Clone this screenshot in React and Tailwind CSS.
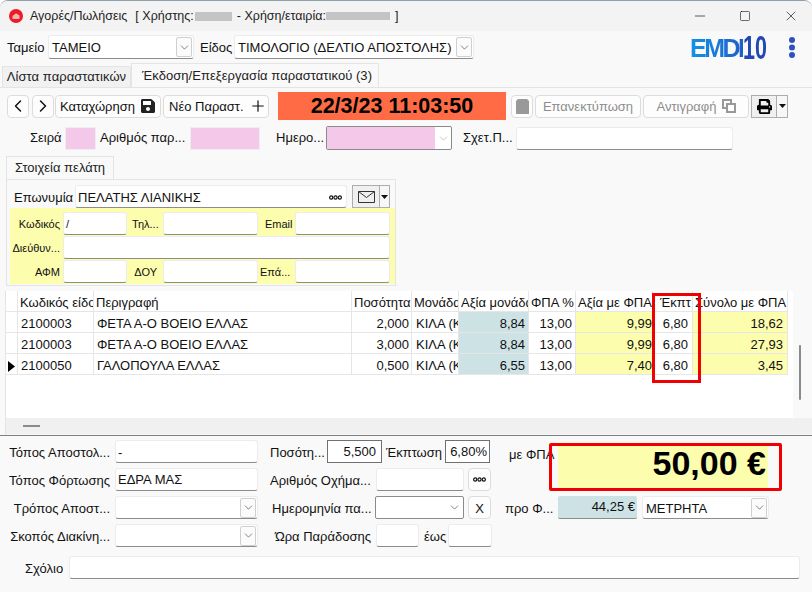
import React from "react";
import { ChevronLeft, ChevronRight, Plus, ChevronDown, Minus, Square, X } from "lucide-react";
import { FaSave, FaPrint } from "react-icons/fa";

const box = "bg-white border border-[#ececec] border-b-[#8c8c8c] rounded-[3px] h-[23px] flex items-center overflow-hidden whitespace-nowrap shrink-0 pt-[2px]";

function Inp({ className = "", children }) {
  return <div className={`${box} px-[2px] ${className}`}>{children}</div>;
}

function Lab({ className = "", children }) {
  return <div className={`shrink-0 whitespace-nowrap pt-[2px] ${className}`}>{children}</div>;
}

function SmallLab({ className = "", children }) {
  return <div className={`shrink-0 whitespace-nowrap ${className}`}>{children}</div>;
}

function DropBtn({ className = "" }) {
  return (
    <div className={`w-[16px] h-[20px] -mt-[2px] bg-[#fbfbfb] border border-[#cfcfcf] rounded-[2px] flex items-center justify-center shrink-0 ${className}`}>
      <ChevronDown size={13} strokeWidth={1.2} color="#444" />
    </div>
  );
}

function Sel({ className = "", children }) {
  return (
    <div className={`${box} pl-[3px] pr-[1px] justify-between ${className}`}>
      <span>{children}</span>
      <DropBtn />
    </div>
  );
}

function Btn({ className = "", children }) {
  return (
    <div className={`h-[23px] bg-[#fdfdfd] border border-[#dcdcdc] rounded-[4px] flex items-center justify-center shrink-0 whitespace-nowrap ${className}`}>
      {children}
    </div>
  );
}

function Caret() {
  return (
    <svg width="7" height="4" viewBox="0 0 7 4"><path d="M0 0h7L3.5 4z" fill="#111" /></svg>
  );
}

function Dots() {
  return (
    <svg width="13" height="5" viewBox="0 0 13 5" fill="none" stroke="#111" strokeWidth="1.2">
      <circle cx="2.2" cy="2.5" r="1.6" /><circle cx="6.5" cy="2.5" r="1.6" /><circle cx="10.8" cy="2.5" r="1.6" />
    </svg>
  );
}

const cols = "grid grid-cols-[12px_76px_258px_60px_47px_70px_47px_77px_40px_95px] w-[782px]";
const cell = "h-[21px] pt-[4px] border-r border-b border-[#e6e6e6] overflow-hidden whitespace-nowrap flex items-center";

const headers = ["", "Κωδικός είδους", "Περιγραφή", "Ποσότητα", "Μονάδα μέτρ", "Αξία μονάδας", "ΦΠΑ %", "Αξία με ΦΠΑ", "Έκπτ", "Σύνολο με ΦΠΑ"];
const rows = [
  ["", "2100003", "ΦΕΤΑ Α-Ο ΒΟΕΙΟ ΕΛΛΑΣ", "2,000", "ΚΙΛΑ (ΚΙΛΑ)", "8,84", "13,00", "9,99", "6,80", "18,62"],
  ["", "2100003", "ΦΕΤΑ Α-Ο ΒΟΕΙΟ ΕΛΛΑΣ", "3,000", "ΚΙΛΑ (ΚΙΛΑ)", "8,84", "13,00", "9,99", "6,80", "27,93"],
  ["arrow", "2100050", "ΓΑΛΟΠΟΥΛΑ ΕΛΛΑΣ", "0,500", "ΚΙΛΑ (ΚΙΛΑ)", "6,55", "13,00", "7,40", "6,80", "3,45"],
];

function rowCellClass(i) {
  if (i === 0) return "justify-center";
  if (i === 1 || i === 2) return "pl-[3px]";
  if (i === 3) return "justify-end pr-[2px]";
  if (i === 4) return "pl-[4px]";
  if (i === 5) return "justify-end pr-[3px] bg-[#cde2e5]";
  if (i === 6) return "justify-end pr-[3px]";
  if (i === 7) return "justify-end pr-[0px] bg-[#fdfdae]";
  if (i === 9) return "justify-end pr-[4px] bg-[#fdfdae]";
  return "justify-end pr-[4px]";
}

export default function App() {
  return (
    <div className="relative w-[812px] h-[592px] overflow-hidden bg-[#f9f9f9] text-[13px] leading-[16px] text-[#111] border-t border-[#8fa1ab] rounded-t-[8px]" style={{ fontFamily: '"Liberation Sans", Arial, sans-serif' }}>
      {/* title bar */}
      <div className="h-[30px] bg-[#f3f3f3] flex items-center text-[12.5px] text-[#222]">
        <svg className="ml-[9px] shrink-0" width="14" height="14" viewBox="0 0 14 14">
          <circle cx="7" cy="7" r="7" fill="#ed1c24" />
          <path d="M3.5 7 7 4.2l3.5 2.3V10h-7z" fill="#f7b5b5" />
        </svg>
        <span className="ml-[7px]">Αγορές/Πωλήσεις</span>
        <span className="ml-[8px]">[ Χρήστης:</span>
        <div className="ml-[1px] w-[37px] h-[9px] bg-[#c4c4c4]" />
        <span className="ml-[5px]">- Χρήση/εταιρία:</span>
        <div className="w-[64px] h-[8px] bg-[#c4c4c4]" />
        <span className="ml-[5px]">]</span>
        <div className="ml-auto flex items-center text-[#111]">
          <Minus size={16} strokeWidth={1} className="mr-[31px]" />
          <Square size={12} strokeWidth={1.2} className="mr-[32px]" />
          <X size={16} strokeWidth={1} className="mr-[13px]" />
        </div>
      </div>

      {/* top row */}
      <div className="mt-[4px] h-[24px] flex items-center">
        <Lab className="ml-[7px] w-[41px]">Ταμείο</Lab>
        <Sel className="w-[146px] !h-[24px]">ΤΑΜΕΙΟ</Sel>
        <Lab className="ml-[6px] w-[34px]">Είδος</Lab>
        <Sel className="w-[240px] !h-[24px]">ΤΙΜΟΛΟΓΙΟ (ΔΕΛΤΙΟ ΑΠΟΣΤΟΛΗΣ)</Sel>
        <div className="ml-[216px] w-[78px] h-[24px] flex items-center font-bold leading-none">
          <span className="text-[25px] tracking-[-2.5px] mt-[3px] bg-gradient-to-r from-[#1193e8] to-[#1d5fc8] bg-clip-text text-transparent">EMDI</span>
          <span className="text-[33px] text-[#2347b5] origin-left scale-x-[0.65]">10</span>
        </div>
        <svg className="ml-[20px]" width="8" height="23" viewBox="0 0 8 23" fill="#2f51bd">
          <circle cx="4" cy="4" r="3" /><circle cx="4" cy="11.5" r="3" /><circle cx="4" cy="19" r="3" />
        </svg>
      </div>

      {/* tabs */}
      <div className="mt-[4px] h-[24px] flex items-end">
        <div className="ml-[2px] w-[129px] h-[21px] bg-[#f1f1f1] border border-b-0 border-[#e4e4e4] flex items-center justify-center text-[#222] tracking-[0.05px]">Λίστα παραστατικών</div>
        <div className="w-[248px] h-[24px] bg-[#f9f9f9] border border-b-0 border-[#e4e4e4] flex items-center pl-[10px] text-[#222] tracking-[0.05px]">Έκδοση/Επεξεργασία παραστατικού (3)</div>
      </div>

      {/* tab page */}
      <div className="border-t border-[#e4e4e4] h-[504px] flex flex-col">
        {/* toolbar */}
        <div className="mt-[4px] h-[28px] flex items-center">
          <Btn className="ml-[7px] w-[22px]"><ChevronLeft size={22} strokeWidth={1.8} color="#111" /></Btn>
          <Btn className="ml-[3px] w-[22px]"><ChevronRight size={22} strokeWidth={1.8} color="#111" /></Btn>
          <Btn className="ml-[1px] w-[106px] gap-[5px]"><span className="pt-[2px]">Καταχώρηση</span> <FaSave size={16} color="#222" /></Btn>
          <Btn className="ml-[2px] w-[106px] !justify-start pl-[5px] gap-[5px]"><span className="pt-[2px]">Νέο Παραστ.</span> <Plus size={18} strokeWidth={1.6} color="#111" /></Btn>
          <div className="ml-[9px] w-[228px] h-[28px] bg-[#ff6b45] flex items-center justify-center text-[21.5px] font-bold text-black">22/3/23 11:03:50</div>
          <Btn className="ml-[5px] w-[22px] bg-[#f9f9f9]">
            <svg width="13" height="15" viewBox="0 0 13 15"><path d="M2 0h9l2 2v13H0V2z" fill="#999" /></svg>
          </Btn>
          <Btn className="ml-[2px] w-[106px] text-[#8d8d8d] bg-[#f9f9f9] pt-[2px]">Επανεκτύπωση</Btn>
          <Btn className="ml-[2px] w-[106px] text-[#8d8d8d] bg-[#f9f9f9] gap-[5px]">
            <span className="pt-[2px]">Αντιγραφή</span>
            <svg width="14" height="14" viewBox="0 0 14 14"><path d="M0 0h10v4h4v10H4v-4H0zM2 2v6h2V4h4V2zM6 6v6h6V6z" fill="#999" /></svg>
          </Btn>
          <div className="ml-[2px] w-[37px] h-[23px] flex border border-[#adadad] bg-[#f0f0f0] shrink-0">
            <div className="w-[25px] flex items-center justify-center border-r border-[#adadad]"><FaPrint size={15} color="#000" /></div>
            <div className="flex-1 flex items-center justify-center bg-[#f7f7f7]"><Caret /></div>
          </div>
        </div>

        {/* series row */}
        <div className="mt-[6px] h-[24px] flex items-center">
          <SmallLab className="ml-[30px] w-[35px]">Σειρά</SmallLab>
          <div className="w-[31px] h-[23px] bg-[#f3c8e8] border border-[#eee] shrink-0" />
          <SmallLab className="ml-[4px] w-[90px]">Αριθμός παρ...</SmallLab>
          <div className="w-[70px] h-[23px] bg-[#f3c8e8] border border-[#eee] shrink-0" />
          <SmallLab className="ml-[16px] w-[50px]">Ημερο...</SmallLab>
          <div className="w-[126px] h-[24px] flex border border-[#8a8a8a] rounded-[2px] bg-white shrink-0">
            <div className="w-[108px] bg-[#f3c8e8]" />
            <div className="flex-1 flex items-center justify-center"><ChevronDown size={13} strokeWidth={1} color="#999" /></div>
          </div>
          <SmallLab className="ml-[11px] w-[53px]">Σχετ.Π...</SmallLab>
          <Inp className="w-[217px]" />
        </div>

        {/* customer */}
        <div className="mt-[6px] ml-[6px] w-[108px] h-[23px] bg-[#f9f9f9] border border-b-0 border-[#e4e4e4] flex items-center pl-[8px] text-[#222]">Στοιχεία πελάτη</div>
        <div className="ml-[6px] w-[390px] h-[107px] border border-[#e4e4e4] flex flex-col pt-[5px]">
          <div className="h-[23px] flex items-center">
            <Lab className="ml-[7px] w-[61px]">Επωνυμία</Lab>
            <Inp className="w-[272px] justify-between">
              <span>ΠΕΛΑΤΗΣ ΛΙΑΝΙΚΗΣ</span>
              <span className="mr-[2px]"><Dots /></span>
            </Inp>
            <div className="ml-[5px] w-[38px] h-[23px] flex border border-[#adadad] bg-[#f0f0f0] shrink-0">
              <div className="w-[27px] flex items-center justify-center border-r border-[#adadad]">
                <svg width="17" height="12" viewBox="0 0 17 12" fill="none" stroke="#333"><path d="M.5.5h16v11H.5zM.5.5l8 6 8-6" /></svg>
              </div>
              <div className="flex-1 flex items-center justify-center bg-[#f7f7f7]"><Caret /></div>
            </div>
          </div>
          <div className="ml-[3px] w-[385px] h-[76px] bg-[#fdfdae] flex flex-col pt-[4px] gap-[1px] text-[11px]">
            <div className="h-[23px] flex items-center">
              <SmallLab className="w-[50px] text-right">Κωδικός</SmallLab>
              <Inp className="ml-[3px] w-[64px] !pt-0">/</Inp>
              <SmallLab className="ml-[5px] w-[25px]">Τηλ...</SmallLab>
              <Inp className="ml-[6px] w-[95px]" />
              <SmallLab className="ml-[7px] w-[27px]">Email</SmallLab>
              <Inp className="ml-[3px] w-[95px]" />
            </div>
            <div className="h-[23px] flex items-center">
              <SmallLab className="w-[50px] text-right">Διεύθυν...</SmallLab>
              <Inp className="ml-[3px] w-[327px]" />
            </div>
            <div className="h-[23px] flex items-center">
              <SmallLab className="w-[50px] text-right">ΑΦΜ</SmallLab>
              <Inp className="ml-[3px] w-[64px]" />
              <SmallLab className="ml-[5px] w-[25px] text-right">ΔΟΥ</SmallLab>
              <Inp className="ml-[6px] w-[95px]" />
              <SmallLab className="ml-[2px] w-[30px]">Επά...</SmallLab>
              <Inp className="ml-[5px] w-[95px]" />
            </div>
          </div>
        </div>

        {/* data grid */}
        <div className="mt-[5px] ml-[5px] h-[144px] flex flex-col border-l border-[#e4e4e4]">
          <div className="h-[127px] flex shrink-0">
            <div className="w-[787px] h-[127px] bg-white shrink-0">
              <div className={cols}>
                {headers.map((h, i) => (
                  <div key={i} className={`${cell} ${i === 0 ? "" : i === 8 ? "pl-[7px]" : "pl-[2px]"}`}>{h}</div>
                ))}
              </div>
              {rows.map((r, ri) => (
                <div key={ri} className={cols}>
                  {r.map((c, i) => (
                    <div key={i} className={`${cell} ${rowCellClass(i)}`}>
                      {c === "arrow" ? (
                        <svg width="7" height="11" viewBox="0 0 7 11"><path d="M0 0l7 5.5L0 11z" fill="#000" /></svg>
                      ) : c}
                    </div>
                  ))}
                </div>
              ))}
            </div>
            <div className="ml-[6px] mt-[54px] w-[2px] h-[55px] bg-[#8a8a8a] rounded-[1px]" />
          </div>
          <div className="h-[16px] bg-[#f0f0f0] shrink-0 flex items-center">
            <div className="ml-[17px] w-[17px] h-[2px] bg-[#8a8a8a]" />
          </div>
        </div>
        <div className="h-[1px] bg-[#7f7f7f] shrink-0" />

        {/* bottom form */}
        <div className="flex mt-[4px]">
          <div className="w-[492px] shrink-0 flex flex-col gap-[5px]">
            <div className="h-[23px] flex items-center">
              <Lab className="w-[110px] text-right">Τόπος Αποστολ...</Lab>
              <Inp className="ml-[5px] w-[143px]">-</Inp>
              <Lab className="ml-[12px] w-[57px]">Ποσότη...</Lab>
              <div className="w-[55px] h-[23px] bg-white border border-[#707070] flex items-center justify-end pr-[5px] shrink-0">5,500</div>
              <Lab className="ml-[4px] w-[59px]">Έκπτωση</Lab>
              <div className="w-[45px] h-[23px] bg-white border border-[#707070] flex items-center justify-end pr-[2px] shrink-0">6,80%</div>
            </div>
            <div className="h-[23px] flex items-center">
              <Lab className="w-[110px] text-right">Τόπος Φόρτωσης</Lab>
              <Inp className="ml-[5px] w-[143px] !pt-0">ΕΔΡΑ ΜΑΣ</Inp>
              <Lab className="ml-[12px] w-[104px]">Αριθμός Οχήμα...</Lab>
              <Inp className="ml-[2px] w-[88px]" />
              <Btn className="ml-[4px] w-[23px]"><Dots /></Btn>
            </div>
          </div>
          <div className="flex-1 flex">
            <Lab className="ml-[17px] mt-[5px] w-[49px]">με ΦΠΑ</Lab>
            <div className="mt-[4px] w-[210px] h-[44px] bg-[#fdfdae] flex items-center justify-end pr-[2px] pb-[7px] text-[34px] font-bold text-black shrink-0">50,00 €</div>
          </div>
        </div>

        <div className="mt-[5px] h-[23px] flex items-center">
          <Lab className="w-[110px] text-right">Τρόπος Αποστ...</Lab>
          <Sel className="ml-[5px] w-[143px]" />
          <Lab className="ml-[14px] w-[102px]">Ημερομηνία πα...</Lab>
          <div className="ml-[1px] w-[89px] h-[23px] flex items-center justify-end pr-[2px] bg-white border border-[#8a8a8a] rounded-[2px] shrink-0">
            <ChevronDown size={13} strokeWidth={1.2} color="#444" />
          </div>
          <Btn className="ml-[4px] w-[23px] pt-[2px]">Χ</Btn>
          <Lab className="ml-[14px] w-[53px]">προ Φ...</Lab>
          <div className="w-[79px] h-[23px] bg-[#cde2e5] border-b border-[#8c8c8c] rounded-[2px] flex items-center justify-end pr-[2px] shrink-0">44,25 €</div>
          <Sel className="ml-[5px] w-[127px]">ΜΕΤΡΗΤΑ</Sel>
        </div>

        <div className="mt-[5px] h-[23px] flex items-center">
          <Lab className="w-[110px] text-right">Σκοπός Διακίνη...</Lab>
          <Sel className="ml-[5px] w-[143px]" />
          <Lab className="ml-[12px] w-[101px] text-right">Ώρα Παράδοσης</Lab>
          <Inp className="ml-[5px] w-[43px]" />
          <Lab className="ml-[5px] w-[24px]">έως</Lab>
          <Inp className="w-[44px]" />
        </div>

        <div className="mt-[9px] h-[23px] flex items-center">
          <Lab className="ml-[25px] w-[44px]">Σχόλιο</Lab>
          <Inp className="w-[731px]" />
        </div>
      </div>

      {/* annotation frames */}
      <div className="absolute left-[652px] top-[292px] w-[49px] h-[90px] border-[3px] border-[#f00000] pointer-events-none" />
      <div className="absolute left-[549px] top-[442px] w-[233px] h-[48px] border-[3px] border-[#f00000] rounded-[2px] pointer-events-none" />
    </div>
  );
}
